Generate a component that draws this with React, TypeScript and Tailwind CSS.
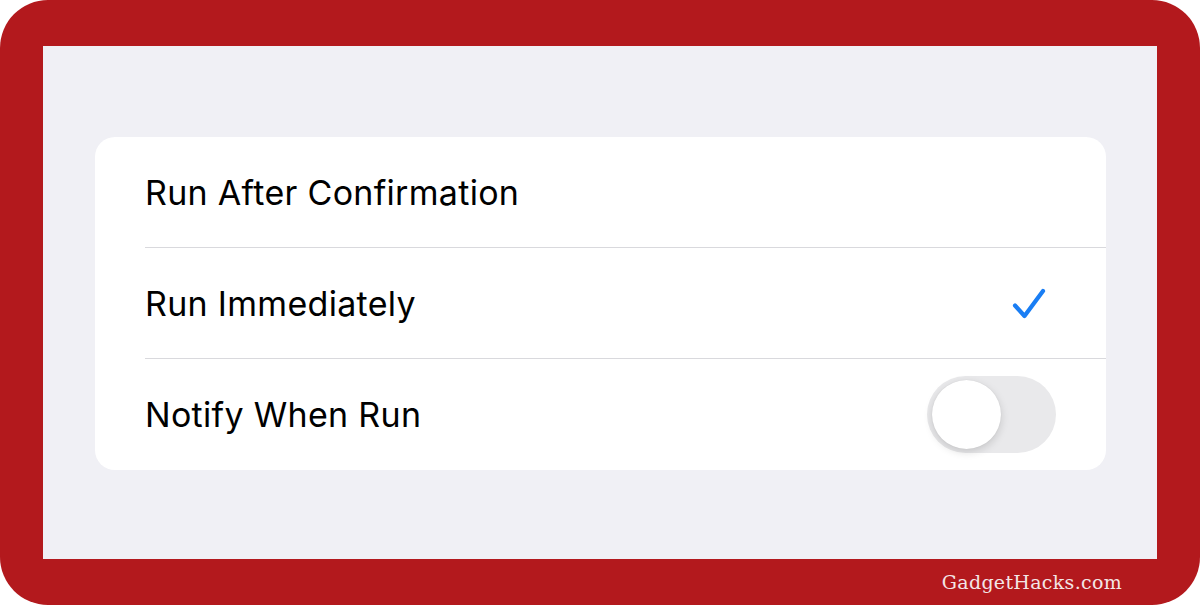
import React from "react";

function Check() {
  return (
    <svg width="34" height="32" viewBox="0 0 34 32" fill="none">
      <path
        d="M3 17.5 L12.5 28 L31 3"
        stroke="#1a7ef4"
        strokeWidth="4.2"
        strokeLinecap="round"
        strokeLinejoin="round"
      />
    </svg>
  );
}

function Toggle() {
  return (
    <div className="relative h-[77px] w-[129px] rounded-full bg-[#e9e9eb]">
      <div className="absolute left-[5px] top-[4px] h-[69px] w-[69px] rounded-full bg-white shadow-[0_3px_8px_rgba(0,0,0,0.15),0_0_1px_rgba(0,0,0,0.12)]" />
    </div>
  );
}

function Row({
  label,
  right,
  last,
}: {
  label: string;
  right?: React.ReactNode;
  last?: boolean;
}) {
  return (
    <div
      className={`flex h-[111px] items-center justify-between pr-[50px] ${
        last ? "" : "border-b border-[#d9d9dd]"
      }`}
    >
      <span className="text-[34px] tracking-[0.3px] text-black">{label}</span>
      {right}
    </div>
  );
}

export default function App() {
  return (
    <div
      className="h-[605px] w-[1200px] bg-white"
      style={{ fontFamily: "Inter, 'Noto Sans', sans-serif" }}
    >
      <div className="flex h-full w-full flex-col rounded-[48px] bg-[#b3191d] px-[43px] pt-[46px]">
        <div className="h-[513px] bg-[#f0f0f5] pl-[52px] pr-[51px] pt-[91px]">
          <div className="overflow-hidden rounded-[20px] bg-white pl-[50px]">
            <Row label="Run After Confirmation" />
            <Row
              label="Run Immediately"
              right={
                <div className="mr-[10px] mt-[2px]">
                  <Check />
                </div>
              }
            />
            <Row label="Notify When Run" right={<Toggle />} last />
          </div>
        </div>
        <div className="flex h-[46px] items-center justify-end pr-[35px]">
          <span
            className="text-[19px] tracking-[0.3px] text-[#f3e6e6]"
            style={{ fontFamily: "'DejaVu Serif', serif" }}
          >
            GadgetHacks.com
          </span>
        </div>
      </div>
    </div>
  );
}
